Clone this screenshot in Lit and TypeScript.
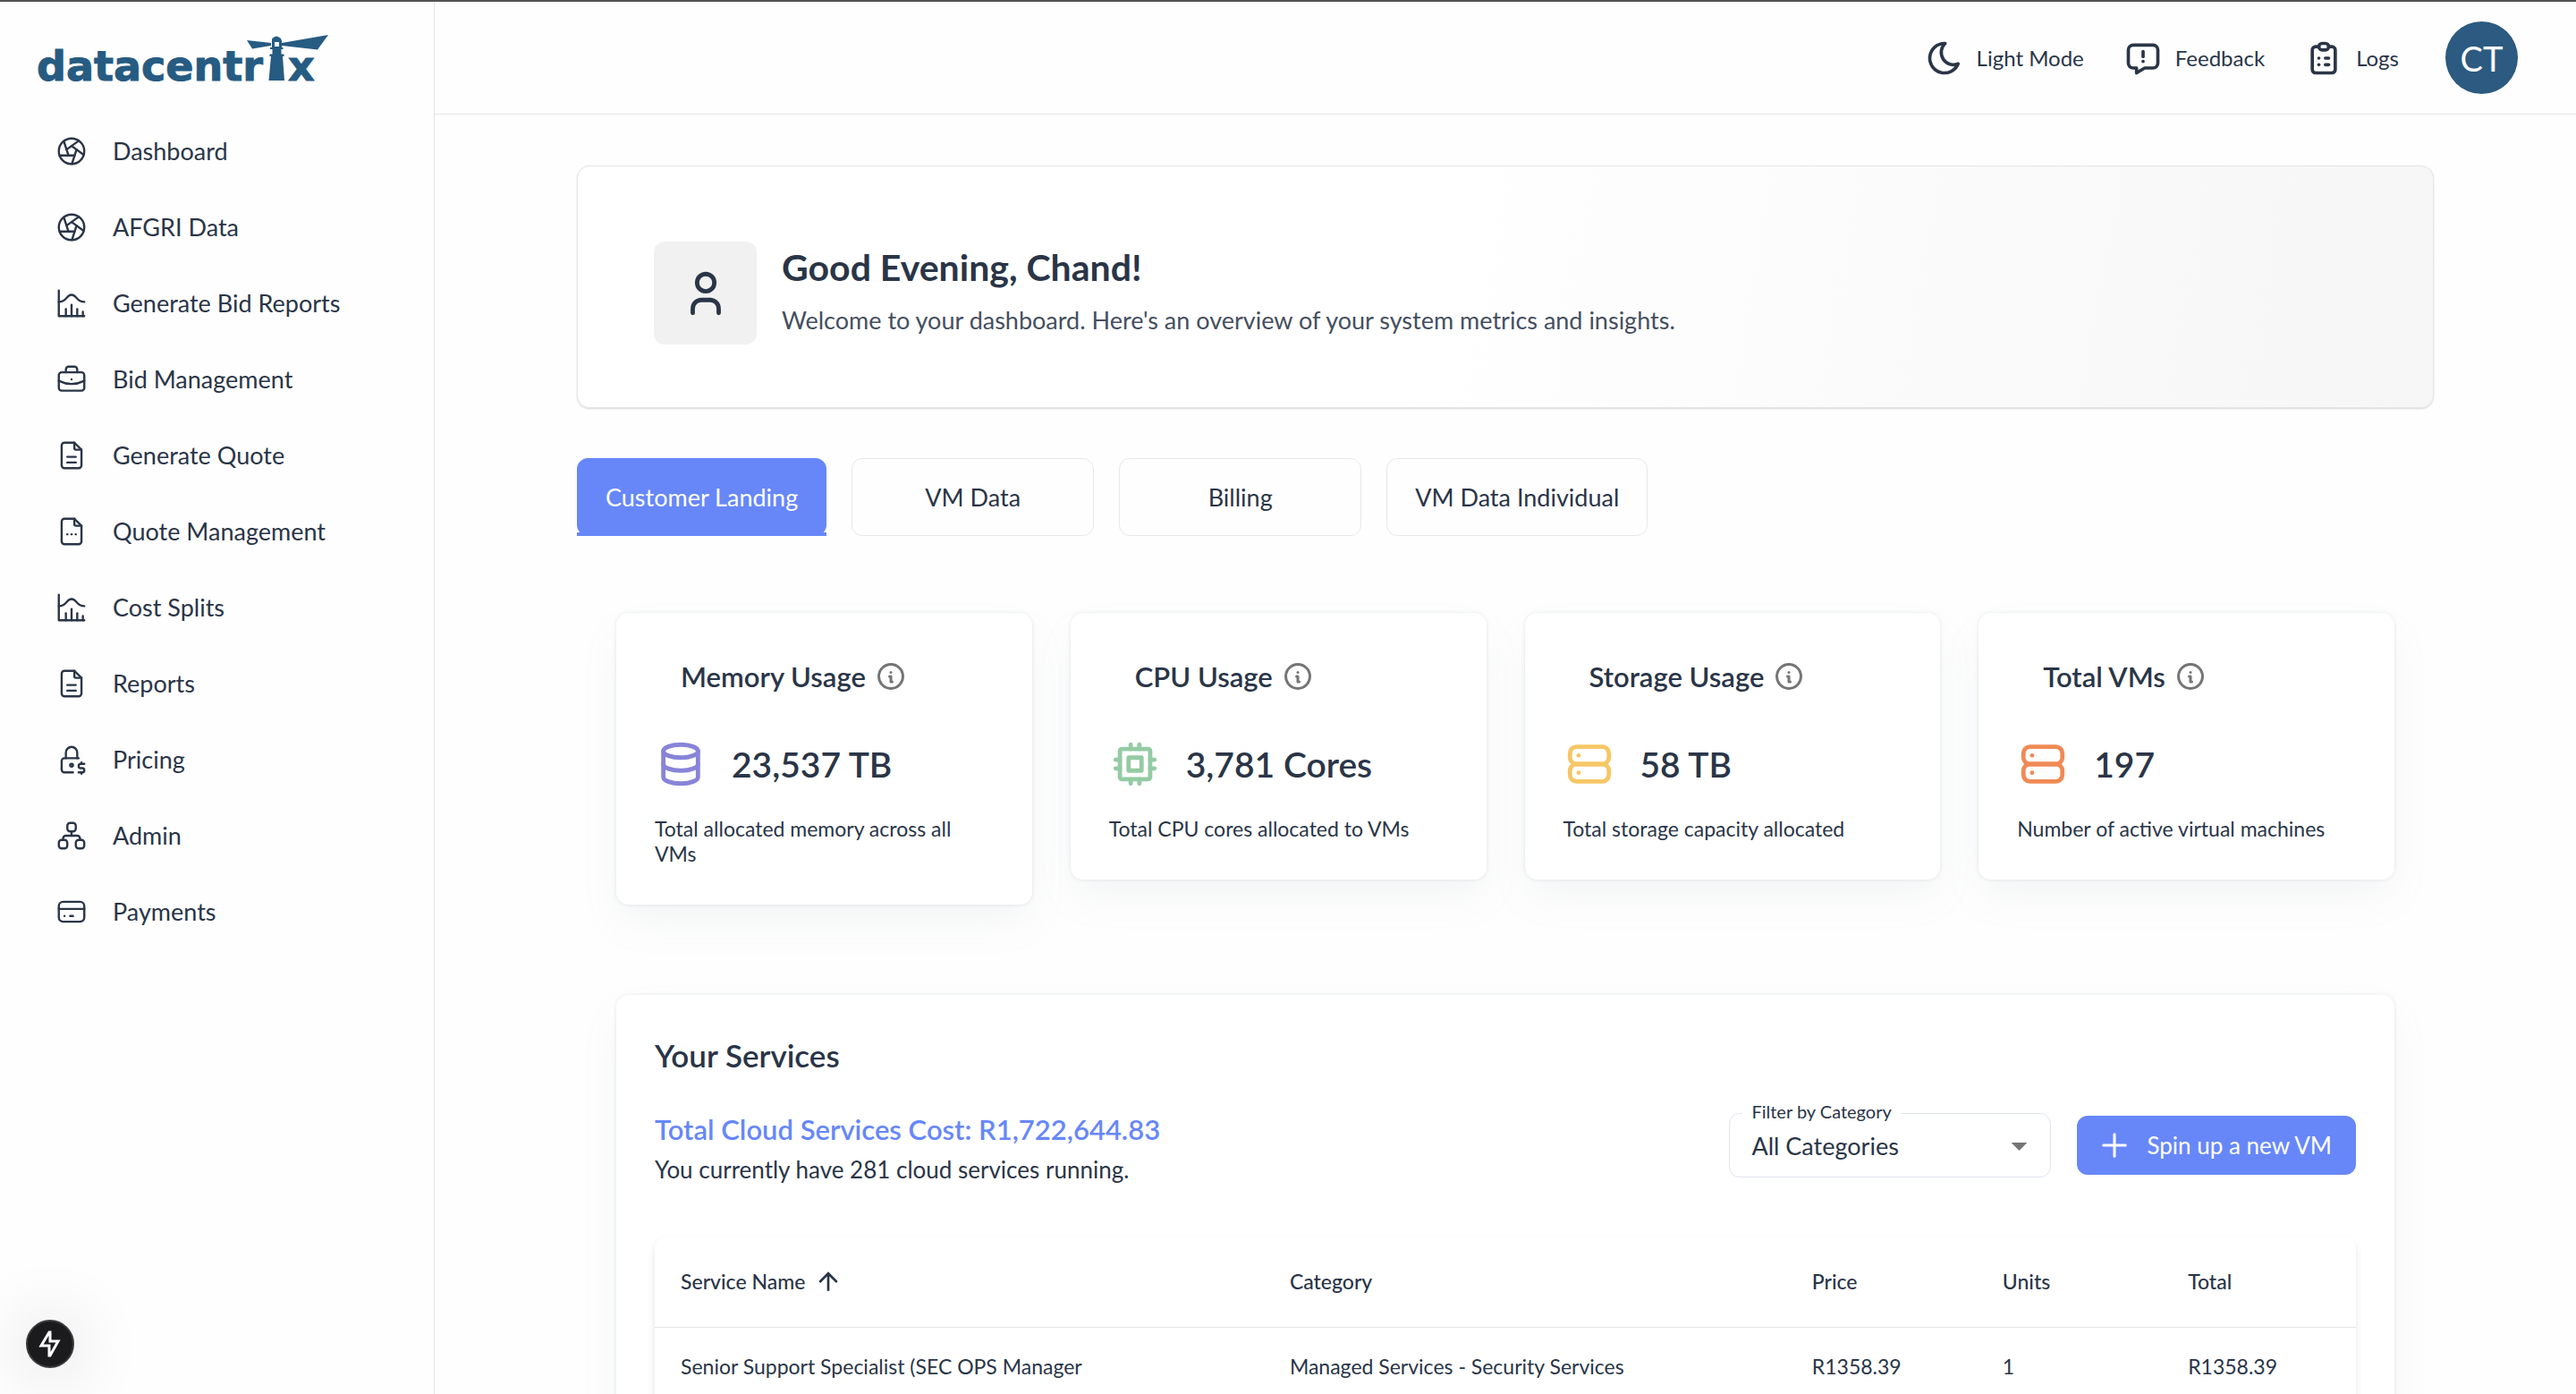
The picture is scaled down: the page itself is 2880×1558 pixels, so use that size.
import { LitElement, html, svg, css } from "lit";
import { customElement, property, state } from "lit/decorators.js";
import { classMap } from "lit/directives/class-map.js";

const ICONS: Record<string, string[]> = {
  aperture: [
    "M3 12a9 9 0 1 0 18 0a9 9 0 1 0 -18 0",
    "M3.6 15h10.55",
    "M6.551 4.938l3.26 10.034",
    "M17.032 4.636l-8.535 6.201",
    "M20.559 14.51l-8.535 -6.201",
    "M12.257 20.916l3.261 -10.034",
  ],
  histogram: ["M3 3v18h18", "M20 18v3", "M16 16v5", "M12 13v8", "M8 16v5", "M3 11c6 0 5 -5 9 -5s3 5 9 5"],
  briefcase: [
    "M3 9a2 2 0 0 1 2 -2h14a2 2 0 0 1 2 2v9a2 2 0 0 1 -2 2h-14a2 2 0 0 1 -2 -2z",
    "M8 7v-2a2 2 0 0 1 2 -2h4a2 2 0 0 1 2 2v2",
    "M12 12v.01",
    "M3 13a20 20 0 0 0 18 0",
  ],
  fileText: [
    "M14 3v4a1 1 0 0 0 1 1h4",
    "M17 21h-10a2 2 0 0 1 -2 -2v-14a2 2 0 0 1 2 -2h7l5 5v11a2 2 0 0 1 -2 2z",
    "M9 17h6",
    "M9 13h6",
  ],
  fileDots: [
    "M14 3v4a1 1 0 0 0 1 1h4",
    "M17 21h-10a2 2 0 0 1 -2 -2v-14a2 2 0 0 1 2 -2h7l5 5v11a2 2 0 0 1 -2 2z",
    "M9 14v.01",
    "M12 14v.01",
    "M15 14v.01",
  ],
  lockDollar: [
    "M13 21h-6a2 2 0 0 1 -2 -2v-6a2 2 0 0 1 2 -2h10",
    "M11 16a1 1 0 1 0 2 0a1 1 0 0 0 -2 0",
    "M8 11v-4a4 4 0 1 1 8 0v4",
    "M21 15h-2.5a1.5 1.5 0 0 0 0 3h1a1.5 1.5 0 0 1 0 3h-2.5",
    "M19 21v1m0 -8v1",
  ],
  sitemap: [
    "M3 17a2 2 0 0 1 2 -2h2a2 2 0 0 1 2 2v2a2 2 0 0 1 -2 2h-2a2 2 0 0 1 -2 -2z",
    "M15 17a2 2 0 0 1 2 -2h2a2 2 0 0 1 2 2v2a2 2 0 0 1 -2 2h-2a2 2 0 0 1 -2 -2z",
    "M9 5a2 2 0 0 1 2 -2h2a2 2 0 0 1 2 2v2a2 2 0 0 1 -2 2h-2a2 2 0 0 1 -2 -2z",
    "M6 15v-1a2 2 0 0 1 2 -2h8a2 2 0 0 1 2 2v1",
    "M12 9v3",
  ],
  card: [
    "M3 8a3 3 0 0 1 3 -3h12a3 3 0 0 1 3 3v8a3 3 0 0 1 -3 3h-12a3 3 0 0 1 -3 -3z",
    "M3 10h18",
    "M7 15h.01",
    "M11 15h2",
  ],
  moon: ["M12 3c.132 0 .263 0 .393 0a7.5 7.5 0 0 0 7.92 12.446a9 9 0 1 1 -8.313 -12.454z"],
  feedback: [
    "M18 4a3 3 0 0 1 3 3v8a3 3 0 0 1 -3 3h-5l-5 3v-3h-2a3 3 0 0 1 -3 -3v-8a3 3 0 0 1 3 -3h12z",
    "M12 8v3",
    "M12 14v.01",
  ],
  clipboard: [
    "M9 5h-2a2 2 0 0 0 -2 2v12a2 2 0 0 0 2 2h10a2 2 0 0 0 2 -2v-12a2 2 0 0 0 -2 -2h-2",
    "M9 5a2 2 0 0 1 2 -2h2a2 2 0 0 1 0 4h-2a2 2 0 0 1 -2 -2z",
    "M9 12h.01",
    "M13 12h2",
    "M9 16h.01",
    "M13 16h2",
  ],
  user: ["M8 7a4 4 0 1 0 8 0a4 4 0 0 0 -8 0", "M6 21v-2a4 4 0 0 1 4 -4h4a4 4 0 0 1 4 4v2"],
  info: ["M3 12a9 9 0 1 0 18 0a9 9 0 0 0 -18 0", "M12 9h.01", "M11 12h1v4h1"],
  database: [
    "M4 6a8 3 0 1 0 16 0a8 3 0 1 0 -16 0",
    "M4 6v6a8 3 0 0 0 16 0v-6",
    "M4 12v6a8 3 0 0 0 16 0v-6",
  ],
  cpu: [
    "M5 6a1 1 0 0 1 1 -1h12a1 1 0 0 1 1 1v12a1 1 0 0 1 -1 1h-12a1 1 0 0 1 -1 -1z",
    "M9 9h6v6h-6z",
    "M3 10h2",
    "M3 14h2",
    "M10 3v2",
    "M14 3v2",
    "M21 10h-2",
    "M21 14h-2",
    "M14 21v-2",
    "M10 21v-2",
  ],
  server: [
    "M3 7a3 3 0 0 1 3 -3h12a3 3 0 0 1 3 3v2a3 3 0 0 1 -3 3h-12a3 3 0 0 1 -3 -3z",
    "M3 15a3 3 0 0 1 3 -3h12a3 3 0 0 1 3 3v2a3 3 0 0 1 -3 3h-12a3 3 0 0 1 -3 -3z",
    "M7 8v.01",
    "M7 16v.01",
  ],
  plus: ["M12 5v14", "M5 12h14"],
};

const icon = (name: string, size: number, stroke = 2) => html`<svg
  width=${size}
  height=${size}
  viewBox="0 0 24 24"
  fill="none"
  stroke="currentColor"
  stroke-width=${stroke}
  stroke-linecap="round"
  stroke-linejoin="round"
  aria-hidden="true"
>
  ${ICONS[name].map((d) => svg`<path d=${d}></path>`)}
</svg>`;

const base = css`
  *,
  *::before,
  *::after {
    box-sizing: border-box;
  }
  svg {
    display: block;
    flex: none;
  }
  a {
    color: inherit;
    text-decoration: none;
  }
  button {
    font: inherit;
    color: inherit;
    background: none;
    border: 0;
    padding: 0;
    cursor: pointer;
  }
  h1,
  h2,
  h3,
  p {
    margin: 0;
  }
`;

const NAV = [
  ["aperture", "Dashboard"],
  ["aperture", "AFGRI Data"],
  ["histogram", "Generate Bid Reports"],
  ["briefcase", "Bid Management"],
  ["fileText", "Generate Quote"],
  ["fileDots", "Quote Management"],
  ["histogram", "Cost Splits"],
  ["fileText", "Reports"],
  ["lockDollar", "Pricing"],
  ["sitemap", "Admin"],
  ["card", "Payments"],
];

@customElement("side-nav")
export class SideNav extends LitElement {
  static styles = [
    base,
    css`
      :host {
        display: block;
        flex: none;
        width: 486px;
        border-right: 1px solid #e5e5e8;
      }
      .brand {
        display: block;
        height: 124px;
        padding: 34px 0 0 40px;
      }
      .brand text {
        font-family: "DejaVu Sans", "Liberation Sans", sans-serif;
        font-weight: 700;
        font-size: 46px;
        stroke: #265b82;
        stroke-width: 1px;
      }
      .list {
        list-style: none;
        margin: 0;
        padding: 0 40px 0 61px;
      }
      .link {
        display: flex;
        align-items: center;
        gap: 27px;
        height: 85px;
      }
    `,
  ];

  render() {
    return html`
      <a class="brand" href="#" aria-label="datacentrix">
        <svg width="330" height="64" viewBox="0 0 330 64" fill="#265b82">
          <text x="1" y="54">datacentr</text>
          <text x="282" y="54">x</text>
          <path d="M236 9L263 12V15L242 18.500Z"></path>
          <path d="M275 12L327 3L315 19.500L275 15Z"></path>
          <path d="M264 8Q264 6 269 4.500Q274 6 274.500 8V10H264Z"></path>
          <path fill-rule="evenodd" d="M264 9H275V18H264ZM267 11V16H272V11Z"></path>
          <path d="M262 17H276.500V19H274.500V24.500H277.500V27H276L278 54H260.500L263 27H261.500V24.500H264.500V19H262Z"></path>
        </svg>
      </a>
      <nav aria-label="Main">
        <ul class="list">
          ${NAV.map(
            ([glyph, label]) => html`<li><a class="link" href="#">${icon(glyph, 38, 1.5)}<span>${label}</span></a></li>`,
          )}
        </ul>
      </nav>
    `;
  }
}

@customElement("top-bar")
export class TopBar extends LitElement {
  static styles = [
    base,
    css`
      :host {
        display: flex;
        align-items: center;
        justify-content: flex-end;
        flex: none;
        gap: 44px;
        height: 126px;
        padding-right: 65px;
        border-bottom: 1px solid #e5e5e8;
        font-size: 24px;
      }
      .action {
        display: flex;
        align-items: center;
        gap: 14px;
      }
      .avatar {
        width: 81px;
        height: 81px;
        margin-left: 8px;
        border-radius: 50%;
        background: #2c5a80;
        color: #fff;
        font-size: 38px;
      }
    `,
  ];

  render() {
    return html`
      <button class="action">${icon("moon", 44)}Light Mode</button>
      <button class="action">${icon("feedback", 44)}Feedback</button>
      <button class="action">${icon("clipboard", 44)}Logs</button>
      <button class="avatar">CT</button>
    `;
  }
}

@customElement("metric-card")
export class MetricCard extends LitElement {
  @property() heading = "";
  @property() glyph = "";
  @property() value = "";
  @property() note = "";

  static styles = [
    base,
    css`
      :host {
        display: block;
        padding: 43px;
        border-radius: 14px;
        background: #fff;
        box-shadow:
          0 0 4px rgba(145, 158, 171, 0.24),
          0 22px 44px -4px rgba(145, 158, 171, 0.1);
      }
      .head {
        display: flex;
        align-items: center;
        gap: 10px;
        height: 56px;
        padding-left: 29px;
      }
      .title {
        font-size: 31px;
        font-weight: 600;
      }
      .info {
        color: #757575;
      }
      .reading {
        display: flex;
        align-items: center;
        gap: 28px;
        height: 58px;
        margin-top: 41px;
      }
      .database {
        color: #8884d8;
      }
      .cpu {
        color: #94cba3;
      }
      .storage {
        color: #f7c666;
      }
      .vms {
        color: #f08a55;
      }
      .value {
        color: #2a3547;
        font-size: 39px;
        font-weight: 600;
      }
      .note {
        margin-top: 29px;
        font-size: 23px;
        line-height: 28px;
      }
    `,
  ];

  render() {
    const shape = { database: "database", cpu: "cpu", storage: "server", vms: "server" }[this.glyph] ?? "server";
    return html`
      <div class="head">
        <h2 class="title">${this.heading}</h2>
        <button class="info" aria-label="About ${this.heading}">${icon("info", 36)}</button>
      </div>
      <div class="reading ${this.glyph}">${icon(shape, 58)}<span class="value">${this.value}</span></div>
      <p class="note">${this.note}</p>
    `;
  }
}

@customElement("service-panel")
export class ServicePanel extends LitElement {
  static styles = [
    base,
    css`
      :host {
        display: block;
        padding: 43px;
        border-radius: 14px;
        background: #fff;
        box-shadow:
          0 0 4px rgba(145, 158, 171, 0.24),
          0 22px 44px -4px rgba(145, 158, 171, 0.1);
      }
      .title {
        font-size: 35px;
        font-weight: 600;
        line-height: 48px;
      }
      .bar {
        display: flex;
        justify-content: space-between;
        align-items: flex-start;
        margin-top: 37px;
      }
      .cost {
        color: #6787f8;
        font-size: 31px;
        font-weight: 600;
        line-height: 45px;
      }
      .count {
        font-size: 26px;
        line-height: 45px;
      }
      .controls {
        display: flex;
        align-items: center;
        gap: 29px;
        padding-top: 4px;
      }
      .field {
        position: relative;
        width: 360px;
      }
      .label {
        position: absolute;
        left: 15px;
        top: -16px;
        padding: 0 10px;
        background: #fff;
        font-size: 20px;
        line-height: 28px;
      }
      .select {
        display: block;
        width: 100%;
        height: 72px;
        padding: 0 60px 0 24px;
        appearance: none;
        border: 1px solid #dfe5ef;
        border-radius: 12px;
        background: #fff;
        color: inherit;
        font: inherit;
      }
      .caret {
        position: absolute;
        right: 14px;
        top: 15px;
        color: #757575;
        pointer-events: none;
      }
      .primary {
        display: flex;
        align-items: center;
        gap: 15px;
        height: 66px;
        padding: 0 27px 0 21px;
        border-radius: 12px;
        background: #6787f8;
        color: #fff;
        font-size: 26px;
      }
      .sheet {
        margin-top: 52px;
        border-radius: 14px;
        box-shadow: 0 4px 6px rgba(145, 158, 171, 0.3);
        background: #fff;
      }
      .table {
        width: 100%;
        table-layout: fixed;
        border-collapse: collapse;
        font-size: 23px;
        text-align: left;
      }
      .table th {
        height: 101px;
        padding: 0 29px;
        border-bottom: 1px solid #e5e5e8;
        font-weight: 500;
      }
      .table td {
        height: 88px;
        padding: 0 29px;
        border-bottom: 1px solid #e5e5e8;
      }
      .name {
        width: 35.8%;
      }
      .category {
        width: 30.7%;
      }
      .price {
        width: 11.2%;
      }
      .units {
        width: 10.9%;
      }
      .sort {
        display: flex;
        align-items: center;
        gap: 10px;
      }
    `,
  ];

  render() {
    return html`
      <h2 class="title">Your Services</h2>
      <div class="bar">
        <div>
          <p class="cost">Total Cloud Services Cost: R1,722,644.83</p>
          <p class="count">You currently have 281 cloud services running.</p>
        </div>
        <div class="controls">
          <div class="field">
            <select class="select" id="category">
              <option>All Categories</option>
              <option>Managed Services - Security Services</option>
            </select>
            <label class="label" for="category">Filter by Category</label>
            <svg class="caret" width="43" height="43" viewBox="0 0 24 24" fill="currentColor" aria-hidden="true">
              <path d="M7 10l5 5 5-5z"></path>
            </svg>
          </div>
          <button class="primary">${icon("plus", 42, 1.75)}Spin up a new VM</button>
        </div>
      </div>
      <div class="sheet">
        <table class="table">
          <thead>
            <tr>
              <th class="name" aria-sort="ascending">
                <button class="sort">
                  Service Name
                  <svg width="32" height="32" viewBox="0 0 24 24" fill="currentColor" aria-hidden="true">
                    <path d="M4 12l1.410 1.410L11 7.830V20h2V7.830l5.580 5.590L20 12l-8-8z"></path>
                  </svg>
                </button>
              </th>
              <th class="category">Category</th>
              <th class="price">Price</th>
              <th class="units">Units</th>
              <th>Total</th>
            </tr>
          </thead>
          <tbody>
            <tr>
              <td>Senior Support Specialist (SEC OPS Manager</td>
              <td>Managed Services - Security Services</td>
              <td>R1358.39</td>
              <td>1</td>
              <td>R1358.39</td>
            </tr>
          </tbody>
        </table>
      </div>
    `;
  }
}

const TABS = ["Customer Landing", "VM Data", "Billing", "VM Data Individual"];

@customElement("app-root")
export class AppRoot extends LitElement {
  @state() private tab = TABS[0];

  static styles = [
    base,
    css`
      :host {
        display: flex;
        box-sizing: border-box;
        height: 100vh;
        border-top: 2px solid #545254;
        background: #fefefe;
        color: #2a3547;
        font-family: Lato, "Liberation Sans", sans-serif;
        font-size: 27px;
      }
      .main {
        display: flex;
        flex-direction: column;
        flex: 1;
        min-width: 0;
      }
      .scroll {
        flex: 1;
        min-height: 0;
        overflow-y: auto;
        scrollbar-width: none;
        padding: 57px 43px;
      }
      .page {
        max-width: 2076px;
        margin: 0 auto;
      }
      .hero {
        display: flex;
        align-items: center;
        gap: 28px;
        padding: 82px 85px 68px;
        border: 1px solid #e5e5e8;
        border-radius: 14px;
        background: linear-gradient(100deg, #fff 45%, #f6f6f6);
        box-shadow: 0 1px 2px rgba(0, 0, 0, 0.16);
      }
      .badge {
        display: grid;
        place-items: center;
        width: 115px;
        height: 115px;
        border-radius: 12px;
        background: #f1f1f1;
      }
      .greeting {
        font-size: 41px;
        font-weight: 700;
        line-height: 61px;
      }
      .welcome {
        color: #454f5f;
        line-height: 58px;
      }
      .tabs {
        display: flex;
        gap: 28px;
        margin-top: 56px;
      }
      .tab {
        min-width: 271px;
        height: 87px;
        padding: 0 31px;
        border: 1px solid #e7e8ea;
        border-radius: 12px;
      }
      .tab.active {
        position: relative;
        border-color: #6787f8;
        background: #6787f8;
        color: #fff;
      }
      .tab.active::after {
        content: "";
        position: absolute;
        left: -1px;
        right: -1px;
        bottom: -1px;
        height: 4px;
        background: #6787f8;
      }
      .panel {
        padding: 86px 44px 0;
      }
      .metrics {
        display: grid;
        grid-template-columns: repeat(4, 1fr);
        align-items: start;
        gap: 43px;
        margin-bottom: 101px;
      }
      .dev {
        position: fixed;
        left: 29px;
        bottom: 29px;
        display: grid;
        place-items: center;
        width: 54px;
        height: 54px;
        border: 2px solid #3a3a3c;
        border-radius: 50%;
        background: #1b1b1d;
        color: #fff;
        box-shadow: 0 4px 80px rgba(0, 0, 0, 0.2);
      }
    `,
  ];

  render() {
    return html`
      <side-nav></side-nav>
      <div class="main">
        <top-bar></top-bar>
        <main class="scroll">
          <div class="page">
            <section class="hero">
              <div class="badge">${icon("user", 58)}</div>
              <div>
                <h1 class="greeting">Good Evening, Chand!</h1>
                <p class="welcome">
                  Welcome to your dashboard. Here's an overview of your system metrics and insights.
                </p>
              </div>
            </section>
            <div class="tabs" role="tablist">
              ${TABS.map(
                (t) => html`<button
                  class=${classMap({ tab: true, active: t === this.tab })}
                  role="tab"
                  aria-selected=${t === this.tab ? "true" : "false"}
                  @click=${() => (this.tab = t)}
                >
                  ${t}
                </button>`,
              )}
            </div>
            <div class="panel">
              <section class="metrics">
                <metric-card
                  heading="Memory Usage"
                  glyph="database"
                  value="23,537 TB"
                  note="Total allocated memory across all VMs"
                ></metric-card>
                <metric-card
                  heading="CPU Usage"
                  glyph="cpu"
                  value="3,781 Cores"
                  note="Total CPU cores allocated to VMs"
                ></metric-card>
                <metric-card
                  heading="Storage Usage"
                  glyph="storage"
                  value="58 TB"
                  note="Total storage capacity allocated"
                ></metric-card>
                <metric-card
                  heading="Total VMs"
                  glyph="vms"
                  value="197"
                  note="Number of active virtual machines"
                ></metric-card>
              </section>
              <service-panel></service-panel>
            </div>
          </div>
        </main>
      </div>
      <button class="dev" aria-label="Developer tools">
        <svg width="32" height="32" viewBox="0 0 32 32" fill="none" stroke="currentColor" stroke-width="3" aria-hidden="true">
          <path d="M15 3L6 18H15V29H16L25 13H16V3Z"></path>
        </svg>
      </button>
    `;
  }
}
